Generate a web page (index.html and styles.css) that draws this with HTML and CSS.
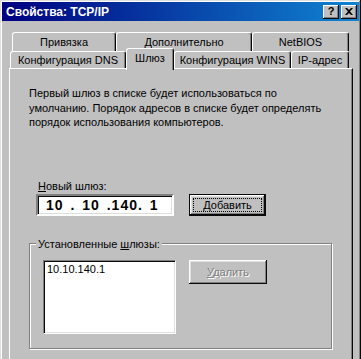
FILE: index.html
```html
<!DOCTYPE html>
<html lang="ru">
  <head>
    <meta charset="UTF-8" />
    <title>Свойства: TCP/IP</title>
    <link rel="stylesheet" href="styles.css">
  </head>
  <body>
    <div class="window">
      <div class="titlebar">
        <span class="title">Свойства: TCP/IP</span>
        <div class="title-buttons">
          <span class="tbtn help">?</span>
          <span class="tbtn close">
            <svg width="8" height="7" viewBox="0 0 8 7"><path d="M0 0h2l2 2 2-2h2L5 3.5 8 7H6L4 5 2 7H0l3-3.5z" fill="#000"/></svg>
          </span>
        </div>
      </div>

      <div class="content">
        <div class="tabs">
          <div class="tab-row back">
            <div class="tab t-bind">Привязка</div>
            <div class="tab t-extra">Дополнительно</div>
            <div class="tab t-netbios">NetBIOS</div>
          </div>
          <div class="tab-row front">
            <div class="tab t-dns">Конфигурация DNS</div>
            <div class="tab t-gw active">Шлюз</div>
            <div class="tab t-wins">Конфигурация WINS</div>
            <div class="tab t-ip">IP-адрес</div>
          </div>
        </div>

        <div class="panel">
          <p class="intro">Первый шлюз в списке будет использоваться по<br>умолчанию. Порядок адресов в списке будет определять<br>порядок использования компьютеров.</p>

          <div class="field-label"><u>Н</u>овый шлюз:</div>
          <div class="new-row">
            <div class="ip-field">10 . 10 .140. 1</div>
            <button class="btn default"><span class="focus"><u>Д</u>обавить</span></button>
          </div>

          <fieldset class="group">
            <legend>Установленные <u>ш</u>люзы:</legend>
            <div class="group-row">
              <div class="listbox">10.10.140.1</div>
              <button class="btn" disabled><u>У</u>далить</button>
            </div>
          </fieldset>
        </div>
      </div>
    </div>
  </body>
</html>
```

FILE: styles.css
```css
* {
  margin: 0;
  padding: 0;
  box-sizing: border-box;
}

html, body {
  height: 100%;
  overflow: hidden;
}

body {
  background: #c0c0c0;
  font-family: "Liberation Sans", Arial, sans-serif;
  font-size: 11px;
  color: #000;
}

.window {
  width: 361px;
  height: 400px;
  padding: 2px;
  background: #c0c0c0;
  box-shadow: inset -1px -1px #0a0a0a, inset 1px 1px #dfdfdf,
    inset -2px -2px #808080, inset 2px 2px #fff;
}

.titlebar {
  height: 19px;
  display: flex;
  align-items: center;
  justify-content: space-between;
  padding: 0 2px 0 4px;
  background: linear-gradient(90deg, #000080, #1084d0);

  > .title {
    color: #fff;
    font-weight: bold;
    font-size: 12px;
  }
}

.title-buttons {
  display: flex;
  gap: 2px;

  > .tbtn {
    width: 16px;
    height: 14px;
    display: flex;
    align-items: center;
    justify-content: center;
    background: #c0c0c0;
    font-weight: bold;
    font-size: 11px;
    line-height: 1;
    box-shadow: inset -1px -1px #0a0a0a, inset 1px 1px #fff,
      inset -2px -2px #808080;
  }
}

.content {
  padding: 11px 6px 0 7px;
}

/* tabs */
.tab-row {
  display: flex;
  height: 19px;

  &.back {
    padding-left: 3px;
  }

  &.front {
    height: 17px;
    padding-left: 1px;
    align-items: flex-end;
  }
}

.tab {
  height: 100%;
  display: flex;
  align-items: center;
  justify-content: center;
  background: #c0c0c0;
  border-top: 1px solid #fff;
  border-left: 1px solid #fff;
  border-right: 1px solid #0a0a0a;
  border-radius: 3px 3px 0 0;
  box-shadow: inset -1px 0 #808080;
  white-space: nowrap;

  &.active {
    position: relative;
    z-index: 1;
    height: 22px;
    margin-bottom: -2px;
    padding-bottom: 4px;
  }
}

.t-bind { width: 104px; }
.t-extra { width: 136px; }
.t-netbios { width: 97px; }
.t-dns { width: 116px; }
.t-gw { width: 48px; }
.t-wins { width: 117px; }
.t-ip { width: 58px; }

/* panel */
.panel {
  width: 344px;
  padding: 17px 19px 40px;
  border-top: 1px solid #fff;
  border-left: 1px solid #fff;
  border-right: 1px solid #0a0a0a;
  box-shadow: inset -1px 0 #808080;

  > .intro {
    line-height: 14.5px;
  }
}

.field-label {
  margin-top: 49px;
  padding-left: 9px;
  line-height: 14px;
}

.new-row {
  display: flex;
  gap: 15px;
  margin-top: 1px;
  padding-left: 7px;
}

.ip-field {
  width: 138px;
  height: 22px;
  padding-left: 8px;
  background: #fff;
  font-size: 14px;
  font-weight: bold;
  line-height: 18px;
  letter-spacing: 1px;
  word-spacing: 2px;
  white-space: pre;
  border: 2px solid;
  border-color: #808080 #fff #fff #808080;
  box-shadow: inset 1px 1px #0a0a0a, inset -1px -1px #dfdfdf;
}

.btn {
  width: 77px;
  height: 22px;
  font: inherit;
  color: #000;
  background: #c0c0c0;
  border: none;
  box-shadow: inset -1px -1px #0a0a0a, inset 1px 1px #fff,
    inset -2px -2px #808080, inset 2px 2px #dfdfdf;

  &.default {
    border: 1px solid #0a0a0a;
    padding: 3px;

    > .focus {
      display: block;
      height: 100%;
      line-height: 12px;
      border: 1px dotted #000;
    }
  }

  &:disabled {
    width: 78px;
    height: 24px;
    color: #808080;
    text-shadow: 1px 1px #fff;
  }
}

.group {
  width: 303px;
  margin-top: 21px;
  padding: 0 6px 14px;
  border: 1px solid #808080;
  box-shadow: 1px 1px #fff, inset 1px 1px #fff;

  > legend {
    padding: 0 2px;
    line-height: 14px;
    background: #c0c0c0;
  }
}

.group-row {
  display: flex;
  align-items: flex-start;
  gap: 13px;
  margin-top: 9px;
  padding-left: 7px;
}

.listbox {
  width: 133px;
  height: 74px;
  padding: 2px 3px;
  background: #fff;
  line-height: 13px;
  border: 1px solid;
  border-color: #808080 #fff #fff #808080;
  box-shadow: inset 1px 1px #0a0a0a, inset -1px -1px #dfdfdf;
}
```
